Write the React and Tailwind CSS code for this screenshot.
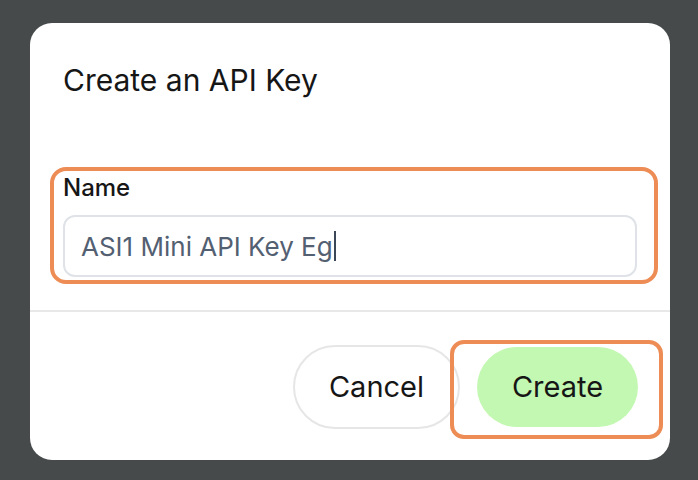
import React from "react";

const App = () => {
  return (
    <div
      className="w-[698px] h-[480px] bg-[#464a4b] overflow-hidden pt-[23px] pl-[30px]"
      style={{ fontFamily: "Inter, 'Noto Sans', sans-serif" }}
    >
      <div className="relative w-[640px] h-[437px] bg-white rounded-[22px] flex flex-col">
        {/* header */}
        <div className="px-[33px] pt-[39px]">
          <h1 className="text-[30px] leading-[36px] text-[#161616]">
            Create an API Key
          </h1>
        </div>

        {/* body */}
        <div className="px-[33px] pt-[76px] pb-[33px]">
          <label className="block text-[24px] leading-[28px] font-medium text-[#161616]">
            Name
          </label>
          <div className="mt-[13px] w-[574px] h-[62px] rounded-[12px] border-2 border-[#dfe3e8] flex items-center pl-[16px]">
            <span className="text-[26px] text-[#536072]">ASI1 Mini API Key Eg</span>
            <span className="w-[2px] h-[30px] bg-[#3b4656] ml-[1px]"></span>
          </div>
        </div>

        {/* footer */}
        <div className="border-t-2 border-[#e8e8e8] flex-1 flex items-center justify-end gap-[17px] pr-[32px] pt-[1px]">
          <button className="w-[167px] h-[84px] rounded-full border-2 border-[#e6e6e6] bg-white text-[29px] text-[#161616]">
            Cancel
          </button>
          <button className="w-[161px] h-[80px] rounded-full bg-[#c3f8b2] text-[29px] text-[#161616]">
            Create
          </button>
        </div>

        {/* highlight outlines */}
        <div className="absolute left-[20px] top-[144px] w-[608px] h-[117px] border-4 border-[#ee8c55] rounded-[16px] pointer-events-none"></div>
        <div className="absolute left-[420px] top-[317px] w-[213px] h-[99px] border-4 border-[#ee8c55] rounded-[14px] pointer-events-none"></div>
      </div>
    </div>
  );
};

export default App;
